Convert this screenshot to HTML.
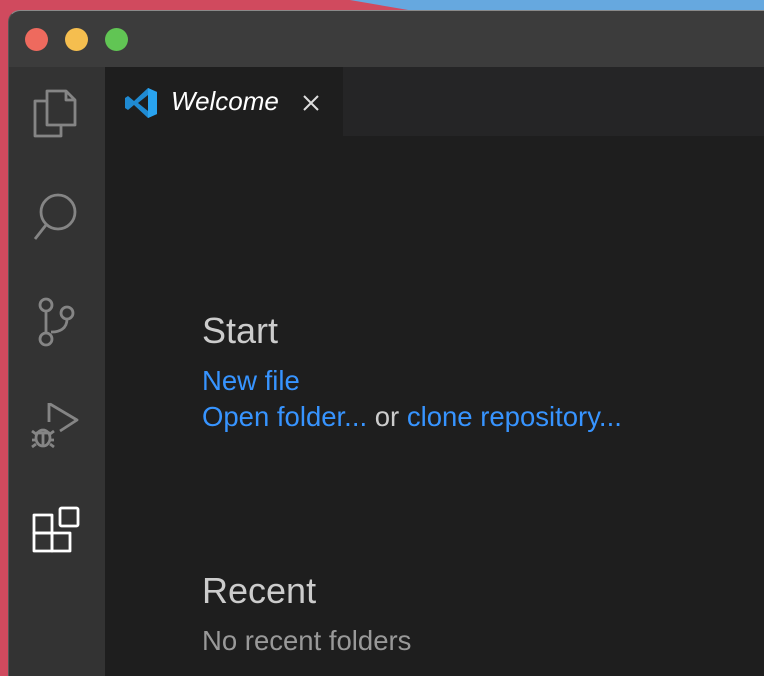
<!DOCTYPE html>
<html><head><style>
html,body{margin:0;width:764px;height:676px;overflow:hidden;font-family:"Liberation Sans",sans-serif}
body{background:#d04a5e;position:relative}
.win{position:absolute;left:8px;top:10px;width:755px;height:665px;border-radius:12px 0 0 0;background:#3c3c3c;border-top:1px solid #8a8a8a;border-left:1px solid #555;overflow:hidden}
.dot{position:absolute;top:17px;width:23px;height:23px;border-radius:50%}
.act{position:absolute;left:0;top:56px;width:96px;height:609px;background:#333333}
.ed{position:absolute;left:96px;top:56px;width:659px;height:609px;background:#1e1e1e}
.tabbar{position:absolute;left:238px;top:0;width:421px;height:69px;background:#252526}
.tab{position:absolute;left:0;top:0;width:238px;height:69px;background:#1e1e1e}
.t{position:absolute;white-space:nowrap;line-height:1}
</style></head><body>
<svg style="position:absolute;left:0;top:0" width="764" height="12"><polygon points="350,0 764,0 764,12 420,12" fill="#66a8df"/></svg>
<div class="win">
<div class="dot" style="left:16px;background:#ee6a5e"></div>
<div class="dot" style="left:56px;background:#f5be4f"></div>
<div class="dot" style="left:96px;background:#61c554"></div>
<div class="act"></div>
<div class="ed">
<div class="tabbar"></div>
<div class="tab">
<svg style="position:absolute;left:19px;top:19px" width="34" height="34" viewBox="0 0 34 34"><path d="M24 2l9 4v22l-9 4-14-13-6 5-3-2v-10l3-2 6 5z" fill="#1f8ad2"/><path d="M24 9v16l-10-8z" fill="#1e1e1e"/><path d="M24 2l9 4v22l-9 4z" fill="#29a3ef"/></svg>
<div class="t" style="left:66px;top:21px;font-size:26px;font-style:italic;color:#fff">Welcome</div>
<svg style="position:absolute;left:197px;top:27px" width="18" height="18" stroke="#ddd" stroke-width="2"><path d="M2 2l14 14M16 2l-14 14"/></svg>
</div>
<div class="t" style="left:97px;top:246px;font-size:36px;color:#ccc">Start</div>
<div class="t" style="left:97px;top:300px;font-size:27.5px;color:#3794ff">New file</div>
<div class="t" style="left:97px;top:336px;font-size:27.5px;color:#ccc"><span style="color:#3794ff">Open folder...</span> or <span style="color:#3794ff">clone repository...</span></div>
<div class="t" style="left:97px;top:506px;font-size:36px;color:#ccc">Recent</div>
<div class="t" style="left:97px;top:560px;font-size:27.5px;color:#999">No recent folders</div>
</div>
</div>
<svg style="position:absolute;left:0;top:0" width="110" height="676" fill="none" stroke="#858585" stroke-width="2.8" stroke-linejoin="round">
<path d="M46 101h-11v35h26v-10"/>
<path d="M47 91h19l9 9v25h-28z M66 91v9h9"/>
<circle cx="58" cy="212" r="17"/><path d="M46 225l-11 14"/>
<circle cx="46" cy="305" r="6"/><circle cx="46" cy="339" r="6"/><circle cx="67" cy="313" r="6"/><path d="M46 311v22 M67 319c0 10-8 13-15 13h-1"/>
<path d="M49 403v19 M50 404l27 16-17 11"/>
<ellipse cx="43" cy="438" rx="7" ry="8"/><path d="M36 433h14 M43 433v13 M32 431l4 3 M32 440h4 M32 447l4-3 M54 431l-4 3 M54 440h-4 M54 447l-4-3"/>
<g stroke="#fff"><rect x="34" y="515" width="18" height="18"/><rect x="34" y="533" width="18" height="18"/><rect x="52" y="533" width="18" height="18"/><rect x="60" y="508" width="18" height="18" rx="1.5"/></g>
</svg>
</body></html>
